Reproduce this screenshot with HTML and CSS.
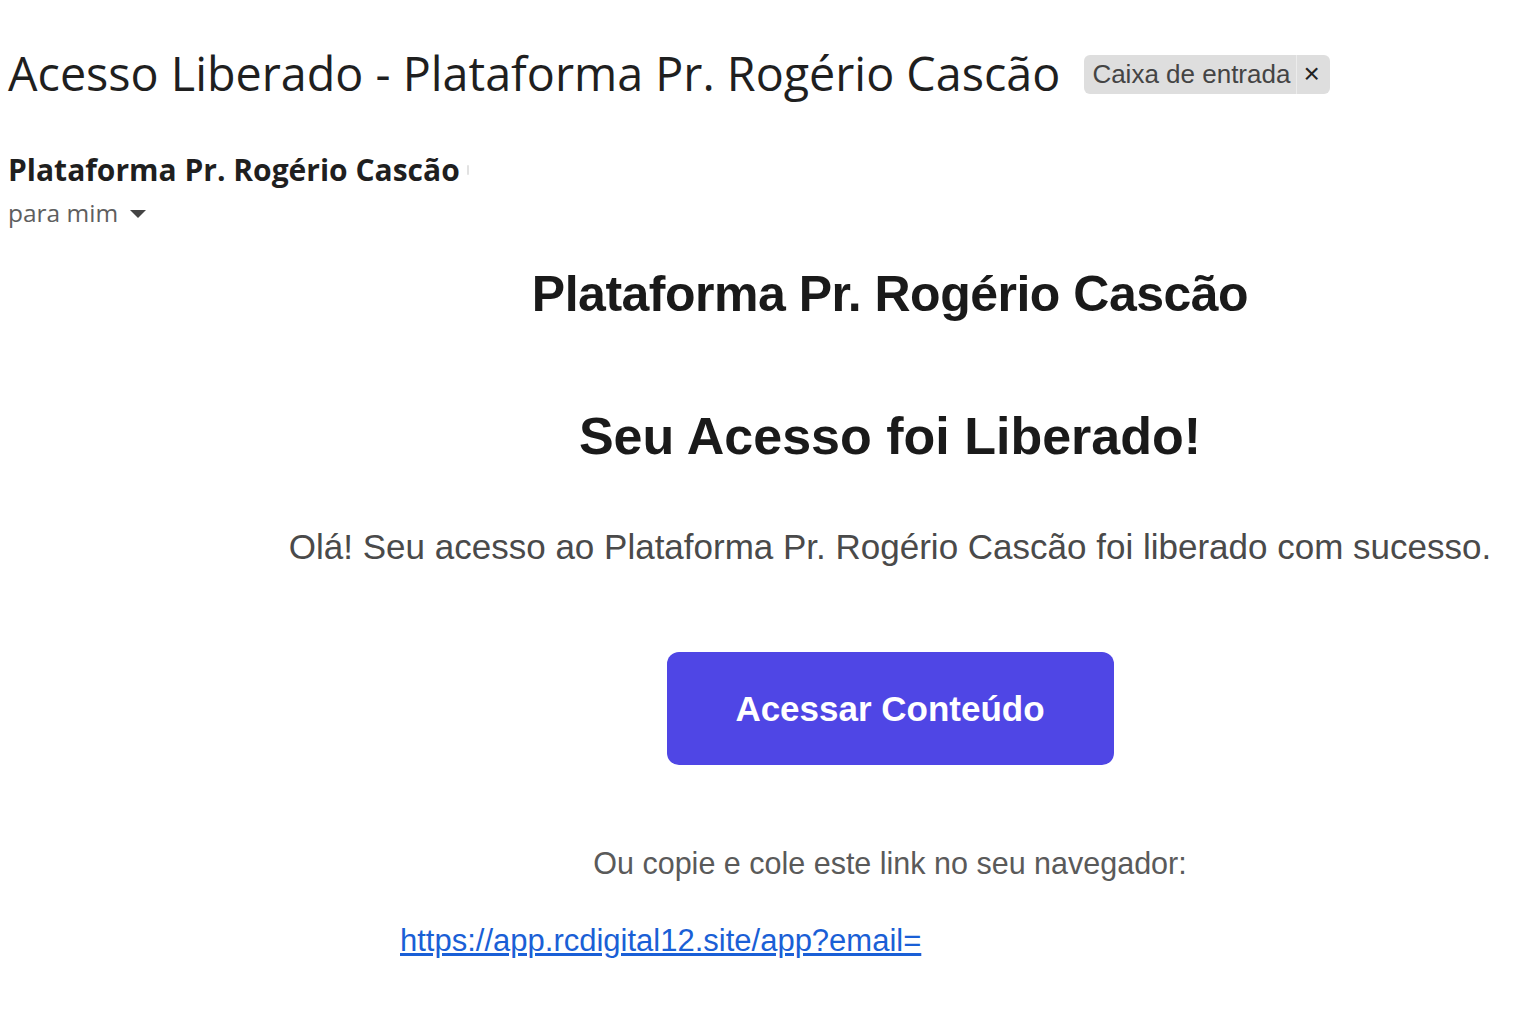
FILE: index.html
```html
<!DOCTYPE html>
<html lang="pt-BR">
<head>
    <meta charset="UTF-8">
    <title>Acesso Liberado - Plataforma Pr. Rogério Cascão</title>
    <link rel="stylesheet" href="styles.css">
</head>
<body>
    <div class="mail">
        <div class="subject-row">
            <h1 class="subject">Acesso Liberado - Plataforma Pr. Rogério Cascão</h1>
            <span class="label">Caixa de entrada<span class="label-x">×</span></span>
        </div>

        <div class="sender">
            <span class="sender-name">Plataforma Pr. Rogério Cascão</span>
            <span class="sender-mail"></span>
        </div>
        <div class="recipient">
            para mim
            <svg class="caret" width="16" height="8" viewBox="0 0 16 8"><path d="M0 0h16L8 8z" fill="#444"/></svg>
        </div>

        <div class="content">
            <h2 class="brand">Plataforma Pr. Rogério Cascão</h2>
            <h3 class="title">Seu Acesso foi Liberado!</h3>
            <p class="intro">Olá! Seu acesso ao Plataforma Pr. Rogério Cascão foi liberado com sucesso.</p>
            <a class="cta" href="#">Acessar Conteúdo</a>
            <p class="hint">Ou copie e cole este link no seu navegador:</p>
            <div class="link-row">
                <a class="link" href="#">https://app.rcdigital12.site/app?email=</a>
            </div>
        </div>
    </div>
</body>
</html>
```

FILE: styles.css
```css
* {
    box-sizing: border-box;
}
body {
    margin: 0;
    background-color: #ffffff;
    font-family: "Open Sans", Roboto, sans-serif;
    color: #1f1f1f;
}
.mail {
    padding: 40px 0 0 8px;
}
.subject-row {
    display: flex;
    align-items: center;
    gap: 24px;
}
.subject {
    margin: 0;
    font-size: 46.7px;
    font-weight: 400;
    color: #1f1f1f;
    line-height: 66px;
    white-space: nowrap;
}
.label {
    display: flex;
    align-items: center;
    height: 39px;
    padding: 0 0 0 8px;
    background-color: #dedede;
    border-radius: 6px;
    font-family: "Liberation Sans", Arial, sans-serif;
    font-size: 26px;
    color: #444;
    margin-top: 2px;
}
.label-x {
    display: flex;
    align-items: center;
    height: 100%;
    margin-left: 6px;
    padding: 0 10px 0 6px;
    border-left: 1px solid #ececec;
    font-size: 28px;
    color: #222;
}
.sender {
    margin-top: 43px;
    display: flex;
    align-items: center;
    gap: 7px;
}
.sender-name {
    font-size: 30px;
    font-weight: 700;
    color: #1f1f1f;
}
.sender-mail {
    width: 2px;
    height: 10px;
    background-color: #e2e2e2;
    border-radius: 1px;
}
.recipient {
    display: flex;
    align-items: center;
    gap: 12px;
    font-size: 24.5px;
    color: #5e5e5e;
    margin-top: 6px;
}
.caret {
    margin-top: 2px;
}
.content {
    width: 1220px;
    margin-left: 272px;
    font-family: "Liberation Sans", Arial, sans-serif;
    text-align: center;
}
.brand {
    margin: 35px 0 0;
    font-size: 50px;
    line-height: 60px;
    font-weight: 700;
    color: #1a1a1a;
    letter-spacing: -0.5px;
}
.title {
    margin: 82px 0 0;
    font-size: 52px;
    line-height: 60px;
    font-weight: 700;
    color: #1a1a1a;
}
.intro {
    margin: 61px 0 0;
    font-size: 35px;
    line-height: 40px;
    color: #4a4a4a;
    white-space: nowrap;
}
.cta {
    display: block;
    margin: 85px auto 0;
    width: 447px;
    padding: 36px 0;
    border-radius: 12px;
    background-color: #4f46e5;
    color: #ffffff;
    font-size: 35px;
    line-height: 41px;
    font-weight: 700;
    text-decoration: none;
}
.hint {
    margin: 80px 0 0;
    font-size: 30.5px;
    line-height: 36px;
    color: #5a5a5a;
}
.link-row {
    margin-top: 42px;
    text-align: left;
    padding-left: 120px;
}
.link {
    font-size: 31px;
    line-height: 36px;
    color: #1a5fd6;
    text-decoration: underline;
}
```
